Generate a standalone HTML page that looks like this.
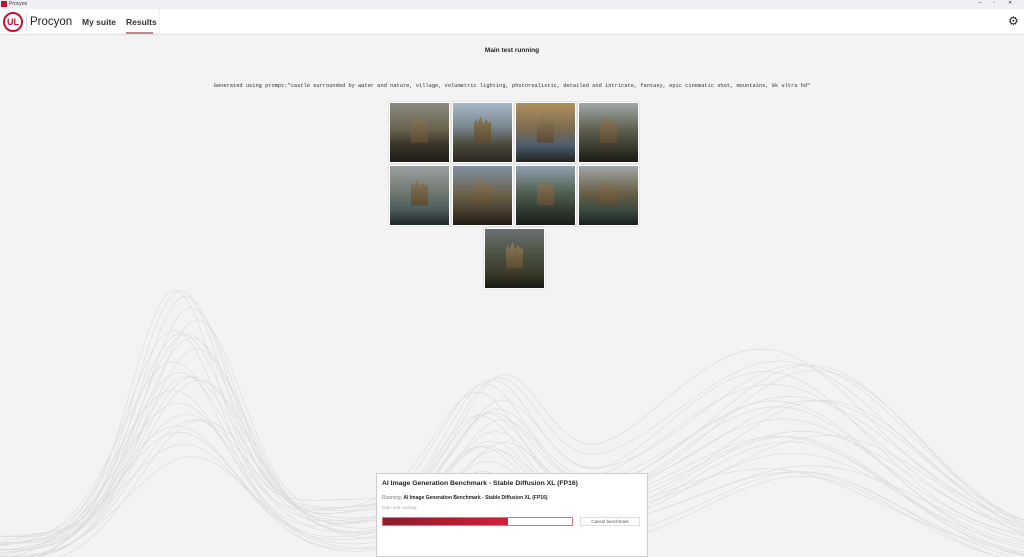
<!DOCTYPE html>
<html><head><meta charset="utf-8"><style>
*{margin:0;padding:0;box-sizing:border-box}
body{width:1024px;height:557px;overflow:hidden;background:#f3f3f3;font-family:"Liberation Sans",sans-serif;position:relative;color:#222}
.tb{position:absolute;left:0;top:0;width:1024px;height:9px;background:#eef0f5;font-size:5px;color:#333}
.hdr{position:absolute;left:0;top:9px;width:1024px;height:26px;background:#fff;border-bottom:1px solid #e2e2e2}
.img{position:absolute;width:61px;height:61px;border:1px solid #fff;box-shadow:0 0 1px #aaa;overflow:hidden}
.img .c{position:absolute;left:35%;top:22%;width:30%;height:45%;background:linear-gradient(#8b7a5a,#5a4a32);clip-path:polygon(0 30%,15% 10%,20% 30%,40% 0,55% 30%,70% 12%,85% 28%,100% 20%,100% 100%,0 100%)}
</style></head><body>
<svg style="position:absolute;left:0;top:0" width="1024" height="557" id="w"></svg>
<div class="tb"><span style="position:absolute;left:1px;top:1px;width:6px;height:6px;background:#c8102e"></span><span style="position:absolute;left:9px;top:1px">Procyon</span>
<span style="position:absolute;left:979px;top:0">–</span><span style="position:absolute;left:993px;top:0">▫</span><span style="position:absolute;left:1008px;top:0">✕</span></div>
<div class="hdr">
<div style="position:absolute;left:3px;top:3px;width:20px;height:20px;border:2px solid #c8102e;border-radius:50%;color:#c8102e;font-weight:bold;font-size:9px;line-height:16px;text-align:center">UL</div>
<div style="position:absolute;left:26px;top:4px;width:1px;height:18px;background:#ddd"></div>
<div style="position:absolute;left:30px;top:7px;font-size:11.5px;color:#222">Procyon</div>
<div style="position:absolute;left:82px;top:8px;font-size:8.5px;font-weight:bold;color:#333">My suite</div>
<div style="position:absolute;left:126px;top:8px;font-size:8.5px;font-weight:bold;color:#333">Results</div>
<div style="position:absolute;left:126px;top:23px;width:27px;height:2px;background:#c08790"></div>
<div style="position:absolute;left:159px;top:0;width:1px;height:26px;background:#eee"></div>
<div style="position:absolute;left:1008px;top:5px;font-size:12px;color:#222">⚙</div>
</div>
<div style="position:absolute;left:0;width:1024px;top:47px;text-align:center;font-size:6.5px;font-weight:bold">Main test running</div>
<div style="position:absolute;left:0;width:1024px;top:83px;text-align:center;font-size:5.35px;font-family:'Liberation Mono',monospace;color:#333">Generated using prompt:"castle surrounded by water and nature, village, volumetric lighting, photorealistic, detailed and intricate, fantasy, epic cinematic shot, mountains, 8k ultra hd"</div>
<div id="imgs"></div>
<div style="position:absolute;left:376px;top:473px;width:272px;height:84px;background:#fff;border:1px solid #ccc">
<div style="position:absolute;left:5px;top:6px;font-size:6.8px;font-weight:bold">AI Image Generation Benchmark - Stable Diffusion XL (FP16)</div>
<div style="position:absolute;left:5px;top:21px;font-size:5px"><span style="color:#777">Running:</span> <b>AI Image Generation Benchmark - Stable Diffusion XL (FP16)</b></div>
<div style="position:absolute;left:5px;top:31px;font-size:4.5px;color:#aaa">Main test running</div>
<div style="position:absolute;left:5px;top:43px;width:191px;height:9px;border:1px solid #d77;background:#fff"><div style="width:66%;height:100%;background:linear-gradient(90deg,#8e1c2c,#d0203a)"></div></div>
<div style="position:absolute;left:203px;top:43px;width:60px;height:9px;border:1px solid #ddd;font-size:4.5px;text-align:center;line-height:8px;color:#555">Cancel benchmark</div>
</div>
<script>
function g(x,c,w){return Math.exp(-Math.pow((x-c)/w,2));}
var s=document.getElementById('w'),h='';
for(var i=0;i<24;i++){var t=i/23;var base=540+t*30;var A=235-t*125;var ph=(i%5-2)*6;var d='';
for(var x=-10;x<=1034;x+=8){var f=1.0*g(x,185+ph,60+t*30)+0.5*g(x,490-ph,60)+0.72*g(x,800+ph*2,150)+0.2*g(x,500,320);var y=base-A*f+6*Math.sin(x/60+i);d+=(x<0?'M':' L')+x+' '+y.toFixed(1);}
h+='<path d="'+d+'" fill="none" stroke="#dddddd" stroke-width="0.7"/>';}
s.innerHTML=h;
var P=[[389,102],[452,102],[515,102],[578,102],[389,165],[452,165],[515,165],[578,165],[484,228]];
var bg=['linear-gradient(#8a8a80,#6a6250 45%,#3a3528 70%,#1e1c18)','linear-gradient(#a8b8c8,#7a8890 40%,#4a4a3a 70%,#2a2820)','linear-gradient(#b09060,#7a6a50 45%,#506070 70%,#202420)','linear-gradient(#a0a8a8,#606050 45%,#3a3a30 75%,#1a1a18)','linear-gradient(#9aa0a0,#707870 45%,#506060 70%,#202828)','linear-gradient(#8090a0,#6a6048 50%,#4a4030 75%,#1e1a14)','linear-gradient(#90a0b0,#506050 45%,#303a30 75%,#181c18)','linear-gradient(#a0a8a8,#6a6048 45%,#3a4a40 75%,#1a2020)','linear-gradient(#6a7070,#4a5040 45%,#3a3a2a 75%,#181814)'];
var o='';P.forEach(function(p,i){o+='<div class="img" style="left:'+p[0]+'px;top:'+p[1]+'px;background:'+bg[i]+'"><div class="c"></div></div>';});
document.getElementById('imgs').innerHTML=o;
</script>
</body></html>
